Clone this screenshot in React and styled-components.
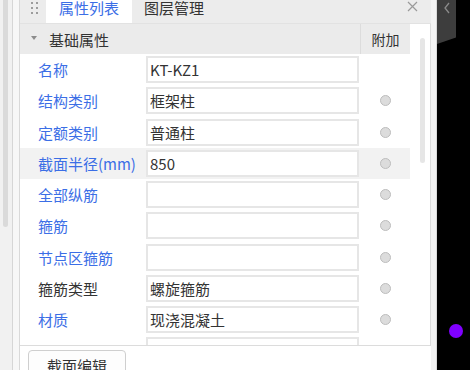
import React from 'react';
import styled, { createGlobalStyle } from 'styled-components';

const GlobalStyle = createGlobalStyle`
  html, body {
    margin: 0;
    padding: 0;
    background: #fff;
    overflow: hidden;
  }
  body {
    font-family: "Noto Sans CJK SC", "Noto Sans", sans-serif;
  }
`;

const rows = [
  { label: '名称', value: 'KT-KZ1', blue: true, extra: false },
  { label: '结构类别', value: '框架柱', blue: true, extra: true },
  { label: '定额类别', value: '普通柱', blue: true, extra: true },
  { label: '截面半径(mm)', value: '850', blue: true, extra: true, active: true },
  { label: '全部纵筋', value: '', blue: true, extra: true },
  { label: '箍筋', value: '', blue: true, extra: true },
  { label: '节点区箍筋', value: '', blue: true, extra: true },
  { label: '箍筋类型', value: '螺旋箍筋', blue: false, extra: true },
  { label: '材质', value: '现浇混凝土', blue: true, extra: true },
  { label: '', value: '', blue: true, extra: false },
];

const App = () => {
  return (
    <>
      <GlobalStyle />
      <Screen>
        <LeftStrip>
          <LeftThumb />
        </LeftStrip>
        <Gutter />
        <Panel>
          <TabBar>
            <Handle>
              {Array.from({ length: 6 }).map((_, i) => (
                <Dot key={i} />
              ))}
            </Handle>
            <Tab $active>属性列表</Tab>
            <Tab>图层管理</Tab>
            <Close>
              <svg width="11" height="11" viewBox="0 0 11 11">
                <path d="M1 1 L10 10 M10 1 L1 10" stroke="#9a9a9a" strokeWidth="1.2" fill="none" />
              </svg>
            </Close>
          </TabBar>
          <Body>
            <Grid>
              <HeaderRow>
                <SectionTitle>
                  <Caret />
                  基础属性
                </SectionTitle>
                <ExtraHead>附加</ExtraHead>
              </HeaderRow>
              {rows.map((r, i) => (
                <Row key={i} $active={r.active}>
                  <Label $blue={r.blue}>{r.label}</Label>
                  <ValueBox>{r.value}</ValueBox>
                  <ExtraCell>{r.extra && <Radio />}</ExtraCell>
                </Row>
              ))}
            </Grid>
            <ScrollCol>
              <ScrollThumb />
            </ScrollCol>
          </Body>
          <Footer>
            <EditButton>截面编辑</EditButton>
          </Footer>
        </Panel>
        <RightEdge />
        <DarkSide>
          <SideTab>
            <svg width="8" height="12" viewBox="0 0 8 12">
              <path d="M6 1 L2 6 L6 11" stroke="#8a8a8a" strokeWidth="1.3" fill="none" />
            </svg>
          </SideTab>
          <PurpleDot />
        </DarkSide>
      </Screen>
    </>
  );
};

export default App;

const Screen = styled.div`
  display: flex;
  width: 470px;
  height: 370px;
  overflow: hidden;
`;

const LeftStrip = styled.div`
  width: 12px;
  background: #f1f1f1;
  border-right: 1px solid #d6d6d6;
  display: flex;
  justify-content: center;
  align-items: flex-start;
`;

const LeftThumb = styled.div`
  width: 5px;
  height: 227px;
  margin-right: 2px;
  border-radius: 0 0 3px 3px;
  background: #dadada;
`;

const Gutter = styled.div`
  width: 6px;
  background: #f7f7f7;
`;

const Panel = styled.div`
  width: 411px;
  display: flex;
  flex-direction: column;
  border-left: 1px solid #d9d9d9;
  background: #fff;
  overflow: hidden;
`;

const TabBar = styled.div`
  height: 23px;
  flex: none;
  display: flex;
  align-items: stretch;
  background: #ececec;
  border-bottom: 1px solid #e2e2e2;
`;

const Handle = styled.div`
  width: 8px;
  margin: 2px 7px 0 11px;
  display: grid;
  grid-template-columns: 2px 2px;
  grid-auto-rows: 2px;
  column-gap: 3px;
  row-gap: 3px;
  align-content: start;
`;

const Dot = styled.span`
  width: 2px;
  height: 2px;
  background: #9c9c9c;
`;

const Tab = styled.div`
  padding: 0 13px 0 ${(p) => (p.$active ? '13px' : '12px')};
  font-size: 15px;
  line-height: 16px;
  color: ${(p) => (p.$active ? '#3b6ee6' : '#333')};
  background: ${(p) => (p.$active ? '#fff' : 'transparent')};
  display: flex;
  align-items: flex-start;
`;

const Close = styled.div`
  margin-left: auto;
  margin-right: 13px;
  display: flex;
  align-items: flex-start;
  padding-top: 1px;
`;

const Body = styled.div`
  height: 321px;
  flex: none;
  display: flex;
  border-right: 1px solid #dcdcdc;
  border-bottom: 1px solid #dcdcdc;
  overflow: hidden;
`;

const Grid = styled.div`
  width: 390px;
  display: flex;
  flex-direction: column;
`;

const HeaderRow = styled.div`
  height: 30px;
  flex: none;
  display: flex;
  background: #ebebeb;
`;

const SectionTitle = styled.div`
  flex: 1;
  display: flex;
  align-items: center;
  padding-left: 11px;
  font-size: 15px;
  color: #333;
`;

const Caret = styled.span`
  width: 0;
  height: 0;
  border-left: 3px solid transparent;
  border-right: 3px solid transparent;
  border-top: 4px solid #8c8c8c;
  margin-right: 12px;
  margin-top: -2px;
`;

const ExtraHead = styled.div`
  width: 49px;
  border-left: 1px solid #dcdcdc;
  display: flex;
  align-items: center;
  justify-content: center;
  font-size: 14px;
  color: #333;
`;

const Row = styled.div`
  height: 31.25px;
  flex: none;
  display: flex;
  align-items: center;
  background: ${(p) => (p.$active ? '#f2f2f2' : '#fff')};
`;

const Label = styled.div`
  width: 108px;
  padding-left: 18px;
  font-size: 15px;
  white-space: nowrap;
  color: ${(p) => (p.$blue ? '#3b6ee6' : '#333')};
`;

const ValueBox = styled.div`
  width: 207px;
  height: 23px;
  border: 2px solid #e6e6e6;
  background: #fff;
  padding-left: 2px;
  display: flex;
  align-items: center;
  font-size: 15px;
  color: #333;
`;

const ExtraCell = styled.div`
  width: 49px;
  margin-left: 2px;
  display: flex;
  justify-content: center;
`;

const Radio = styled.span`
  width: 9px;
  height: 9px;
  border-radius: 50%;
  background: #dcdcdc;
  border: 1px solid #bdbdbd;
`;

const ScrollCol = styled.div`
  flex: 1;
  display: flex;
  justify-content: flex-start;
  padding: 14px 0 0 10px;
`;

const ScrollThumb = styled.div`
  width: 5px;
  height: 125px;
  border-radius: 3px;
  background: #e6e6e6;
`;

const Footer = styled.div`
  flex: 1;
  min-height: 0;
  padding: 4px 0 0 8px;
`;

const EditButton = styled.div`
  width: 96px;
  height: 26px;
  border: 1px solid #cfcfcf;
  border-radius: 4px;
  background: #fdfdfd;
  display: flex;
  justify-content: center;
  align-items: center;
  padding-top: 2px;
  font-size: 15px;
  color: #333;
  line-height: 18px;
`;

const RightEdge = styled.div`
  width: 5px;
  background: #f3f3f3;
  border-right: 1px solid #dadada;
`;

const DarkSide = styled.div`
  flex: 1;
  background: #000;
  position: relative;
`;

const SideTab = styled.div`
  width: 19px;
  height: 44px;
  background: #3d3d3d;
  clip-path: polygon(0 0, 100% 0, 100% 85%, 0 100%);
  display: flex;
  justify-content: center;
  padding-top: 2px;
  box-sizing: border-box;
`;

const PurpleDot = styled.span`
  position: absolute;
  left: 12px;
  top: 324px;
  width: 14px;
  height: 14px;
  border-radius: 50%;
  background: #8000ff;
`;
